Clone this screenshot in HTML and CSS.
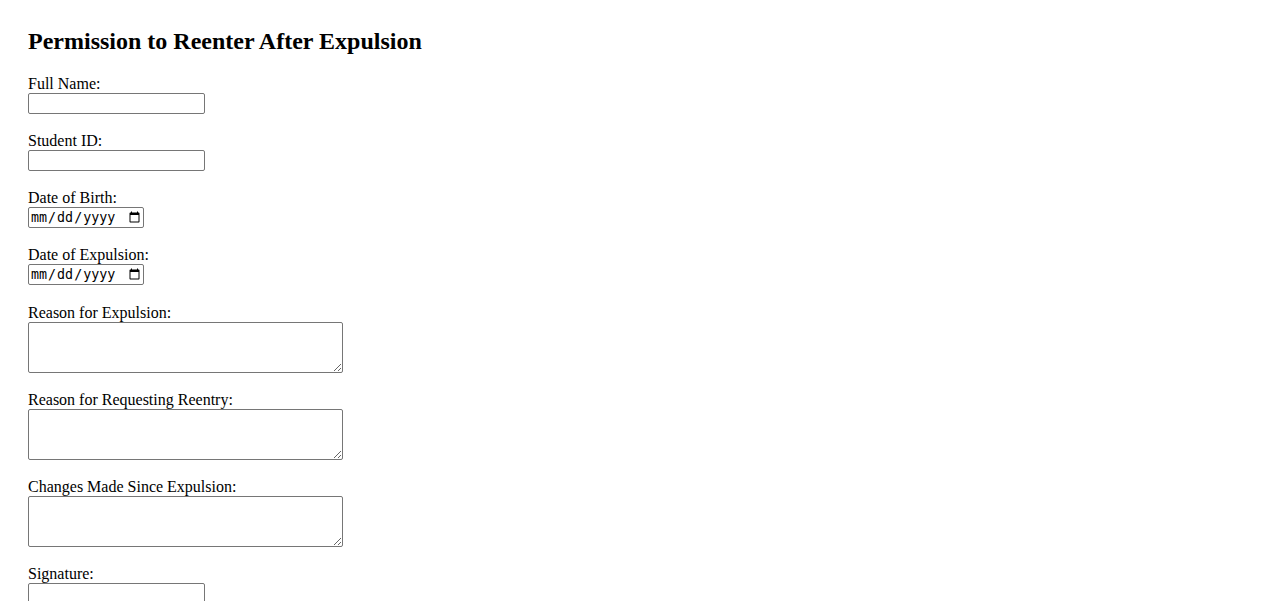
FILE: index.html
```html
<!DOCTYPE html>
<html lang="en">
<head>
<meta charset="utf-8">
<title>Permission to Reenter After Expulsion</title>
<link rel="stylesheet" href="styles.css">
</head>
<body>
<main class="page">
  <h2 class="title">Permission to Reenter After Expulsion</h2>
  <form class="form">
    <div class="field">
      <label class="label" for="name">Full Name:</label>
      <input class="text-input" type="text" id="name" name="name">
    </div>
    <div class="field">
      <label class="label" for="sid">Student ID:</label>
      <input class="text-input" type="text" id="sid" name="sid">
    </div>
    <div class="field">
      <label class="label" for="dob">Date of Birth:</label>
      <input class="date-input" type="date" id="dob" name="dob">
    </div>
    <div class="field">
      <label class="label" for="doe">Date of Expulsion:</label>
      <input class="date-input" type="date" id="doe" name="doe">
    </div>
    <div class="field field-area">
      <label class="label" for="reason">Reason for Expulsion:</label>
      <textarea class="area" id="reason" name="reason"></textarea>
    </div>
    <div class="field">
      <label class="label" for="request">Reason for Requesting Reentry:</label>
      <textarea class="area" id="request" name="request"></textarea>
    </div>
    <div class="field">
      <label class="label" for="changes">Changes Made Since Expulsion:</label>
      <textarea class="area" id="changes" name="changes"></textarea>
    </div>
    <div class="field">
      <label class="label" for="sig">Signature:</label>
      <input class="text-input" type="text" id="sig" name="sig">
    </div>
  </form>
</main>
</body>
</html>
```

FILE: styles.css
```css
html, body {
  margin: 0;
  padding: 0;
  background: #ffffff;
}

body {
  font-family: "Liberation Serif", "Times New Roman", serif;
  font-size: 16px;
  color: #000000;
}

.page {
  padding: 28px;
}

.title {
  margin: 0 0 20px 0;
  font-size: 24px;
  line-height: 27px;
  font-weight: bold;
}

.form {
  display: flex;
  flex-direction: column;
  gap: 18px;
}

.field {
  display: flex;
  flex-direction: column;
  align-items: flex-start;
}

.field-area {
  margin-top: 1px;
}

.label {
  display: block;
  line-height: 18px;
}

.field-area .label {
  margin-bottom: 0;
}

.text-input {
  box-sizing: border-box;
  width: 177px;
  height: 21px;
  margin: 0;
  padding: 1px 2px;
  border: 1px solid #767676;
  border-radius: 2px;
  font-family: "Liberation Sans", Arial, sans-serif;
  font-size: 13.33px;
}

.date-input {
  box-sizing: border-box;
  width: 116px;
  height: 21px;
  margin: 0;
  border: 1px solid #767676;
  border-radius: 2px;
  font-size: 13.33px;
}

.area {
  box-sizing: border-box;
  display: block;
  width: 315px;
  height: 51px;
  margin: 0;
  padding: 2px;
  border: 1px solid #767676;
  border-radius: 2px;
  font-family: "Liberation Mono", monospace;
  font-size: 13.33px;
}
```
